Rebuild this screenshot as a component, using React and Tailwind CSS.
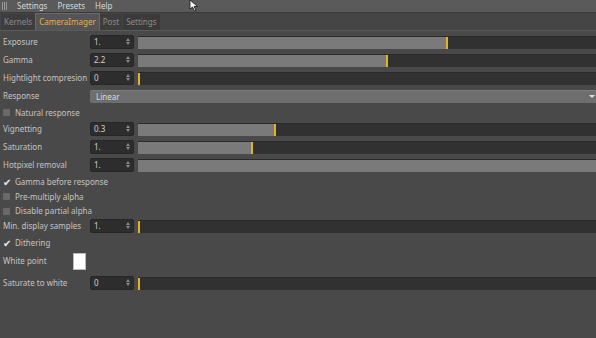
import React from "react";

const font = { fontFamily: '"Noto Sans", "DejaVu Sans", sans-serif' };

function Spin({ value }) {
  return (
    <div className="relative w-[44px] h-[14px] shrink-0 rounded-[2px] bg-[#2d2d2d] border border-[#262626] text-[8px] leading-[12px] text-[#d0d0d0] pl-[3px]">
      {value}
      <span className="absolute right-[3px] top-[2px] flex flex-col items-center gap-[1px]">
        <span className="block w-0 h-0 border-l-[2px] border-r-[2px] border-b-[3px] border-l-transparent border-r-transparent border-b-[#8a8a8a]" />
        <span className="block w-0 h-0 border-l-[2px] border-r-[2px] border-t-[3px] border-l-transparent border-r-transparent border-t-[#8a8a8a]" />
      </span>
    </div>
  );
}

function SliderRow({ label, value, fill, full, h = "h-[18px]" }) {
  return (
    <div className={`flex items-center ${h}`}>
      <div className="w-[90px] shrink-0 pl-[3px] text-[8px] text-[#c4c4c4] whitespace-nowrap">{label}</div>
      <Spin value={value} />
      <div className="ml-[4px] flex-1 h-[13px] bg-[#313131] border-t border-[#2a2a2a] flex">
        {full ? (
          <div className="flex-1 bg-[#7a7a7a]" />
        ) : (
          <>
            <div className="bg-[#7a7a7a]" style={{ width: fill }} />
            <div className="w-[2px] bg-[#e5b225]" />
          </>
        )}
      </div>
    </div>
  );
}

function Check({ label, checked, h = "h-[15px]" }) {
  return (
    <div className={`flex items-center ${h} pl-[3px] text-[8px] text-[#c4c4c4]`}>
      {checked ? (
        <span className="w-[8px] text-[10px] leading-none text-[#e8e8e8]">✔</span>
      ) : (
        <span className="w-[7px] h-[7px] bg-[#6a6a6a] rounded-[1px] mr-[1px]" />
      )}
      <span className="ml-[4px]">{label}</span>
    </div>
  );
}

export default function App() {
  return (
    <div className="w-[596px] h-[338px] bg-[#494949] overflow-hidden relative" style={font}>
      {/* Menu */}
      <div className="h-[13px] bg-[#5a5a5a] flex items-center text-[8px] text-[#d6d6d6] border-b border-[#3a3a3a]">
        <div className="ml-[2px] w-[6px] h-[8px] flex gap-[1px]">
          <span className="w-px h-full bg-[#9a9a9a]" />
          <span className="w-px h-full bg-[#9a9a9a]" />
          <span className="w-px h-full bg-[#9a9a9a]" />
        </div>
        <span className="ml-[9px]">Settings</span>
        <span className="ml-[10px]">Presets</span>
        <span className="ml-[10px]">Help</span>
      </div>
      <svg className="absolute left-[189px] top-0" width="10" height="12" viewBox="0 0 10 12">
        <path d="M1 0 L1 9 L3.5 7 L5.5 11 L7 10.3 L5 6.5 L8.5 6.5 Z" fill="#fff" stroke="#111" strokeWidth="0.8" />
      </svg>

      {/* Tabs */}
      <div className="h-[18px] bg-[#454545] flex items-end border-b border-[#5a5a5a] text-[8px]">
        <div className="h-[16px] ml-[1px] px-[3px] flex items-center bg-[#3d3d3d] text-[#8c8c8c]">Kernels</div>
        <div className="h-[17px] px-[3px] flex items-center bg-[#555555] border border-b-0 border-[#6a6a6a] text-[#e9b23f]">CameraImager</div>
        <div className="h-[16px] px-[3px] flex items-center bg-[#3d3d3d] text-[#8c8c8c]">Post</div>
        <div className="h-[16px] ml-px px-[3px] flex items-center bg-[#3a3a3a] text-[#8c8c8c]">Settings</div>
      </div>

      <div className="pt-[2px]">
        <SliderRow label="Exposure" value="1." fill={308} />
        <SliderRow label="Gamma" value="2.2" fill={248} />
        <SliderRow label="Hightlight compresion" value="0" fill={0} />
        <div className="flex items-center h-[18px]">
          <div className="w-[90px] shrink-0 pl-[3px] text-[8px] text-[#c4c4c4]">Response</div>
          <div className="flex-1 h-[13px] bg-[#6e6e6e] border-t border-[#7c7c7c] rounded-l-[2px] flex items-center pl-[6px] text-[8px] text-[#dcdcdc]">
            Linear
            <span className="ml-auto mr-[1px] w-0 h-0 border-l-[3px] border-r-[3px] border-t-[3px] border-l-transparent border-r-transparent border-t-[#e0e0e0]" />
          </div>
        </div>
        <Check label="Natural response" />
        <SliderRow label="Vignetting" value="0.3" fill={136} />
        <SliderRow label="Saturation" value="1." fill={113} />
        <SliderRow label="Hotpixel removal" value="1." full />
        <Check label="Gamma before response" checked />
        <Check label="Pre-multiply alpha" />
        <Check label="Disable partial alpha" h="h-[14px]" />
        <SliderRow label="Min. display samples" value="1." fill={0} h="h-[16px]" />
        <Check label="Dithering" checked h="h-[18px]" />
        <div className="flex items-center h-[18px] pl-[3px] text-[8px] text-[#c4c4c4]">
          <span className="w-[70px]">White point</span>
          <span className="w-[13px] h-[17px] bg-white border border-[#bbb]" />
        </div>
        <div className="pt-[4px]">
          <SliderRow label="Saturate to white" value="0" fill={0} />
        </div>
      </div>
    </div>
  );
}
